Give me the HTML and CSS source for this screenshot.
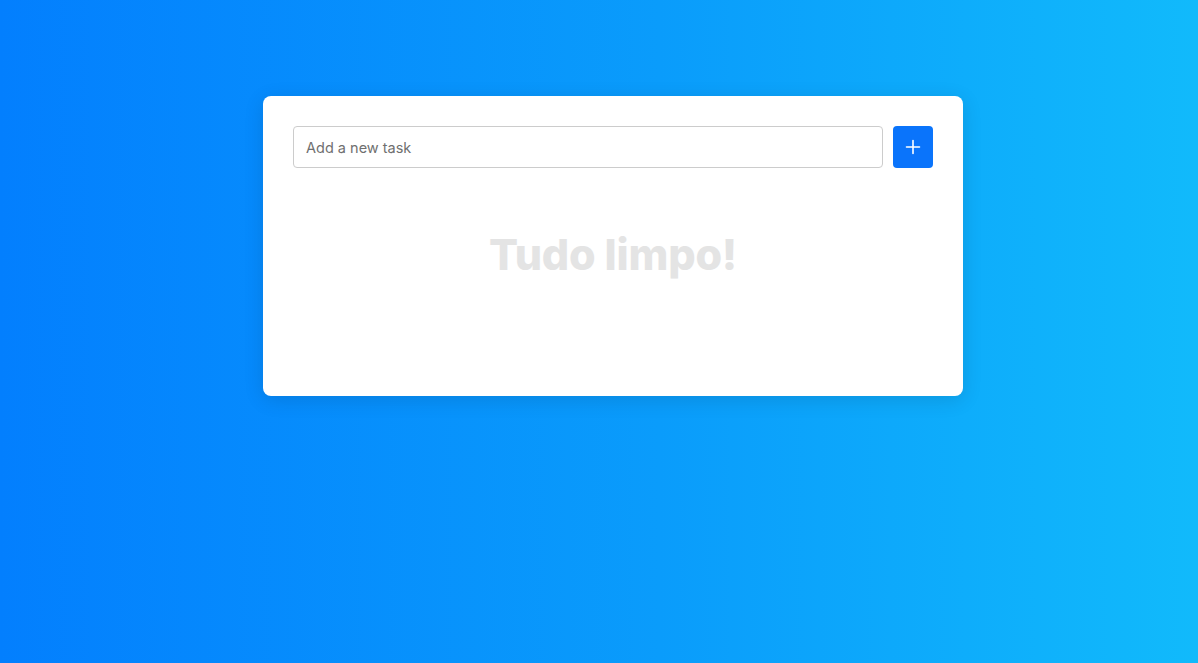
FILE: index.html
```
<!DOCTYPE html>
<html lang="pt">
<head>
<meta charset="utf-8">
<title>Tarefas</title>
<link rel="stylesheet" href="styles.css">
</head>
<body>
<main class="page">
  <section class="card">
    <form class="add-form">
      <input class="task-input" type="text" placeholder="Add a new task">
      <button class="add-btn" type="button" aria-label="Adicionar">
        <svg width="16" height="16" viewBox="0 0 16 16"><path d="M8 1.5v13M1.5 8h13" stroke="#fff" stroke-width="1.6" stroke-linecap="round" fill="none"/></svg>
      </button>
    </form>
    <div class="empty">Tudo limpo!</div>
  </section>
</main>
</body>
</html>
```
FILE: styles.css
```
html, body {
  margin: 0;
  height: 100%;
}
body {
  background: linear-gradient(to right, #037ffe 0%, #0a9cfb 55%, #11bafb 100%);
  font-family: "Inter", "Open Sans", sans-serif;
}
.page {
  display: flex;
  justify-content: center;
  padding-top: 96px;
  padding-left: 28px;
}
.card {
  box-sizing: border-box;
  width: 700px;
  height: 300px;
  background: #fff;
  border-radius: 8px;
  padding: 30px;
  box-shadow: 0 4px 20px rgba(0, 0, 0, 0.12);
}
.add-form {
  display: flex;
  gap: 10px;
}
.task-input {
  flex: 1;
  box-sizing: border-box;
  height: 42px;
  border: 1px solid #cccccc;
  border-radius: 4px;
  padding: 0 12px;
  font-family: "Inter", "Open Sans", sans-serif;
  font-size: 14.5px;
  color: #333;
  outline: none;
}
.task-input::placeholder {
  color: #6f6f6f;
}
.add-btn {
  width: 40px;
  height: 42px;
  border: none;
  border-radius: 4px;
  background: #0a74fb;
  display: flex;
  align-items: center;
  justify-content: center;
  padding: 0;
  cursor: pointer;
}
.empty {
  margin-top: 60px;
  text-align: center;
  font-size: 43px;
  font-weight: 800;
  color: #e4e4e4;
  letter-spacing: -0.2px;
  line-height: 52px;
}
```
